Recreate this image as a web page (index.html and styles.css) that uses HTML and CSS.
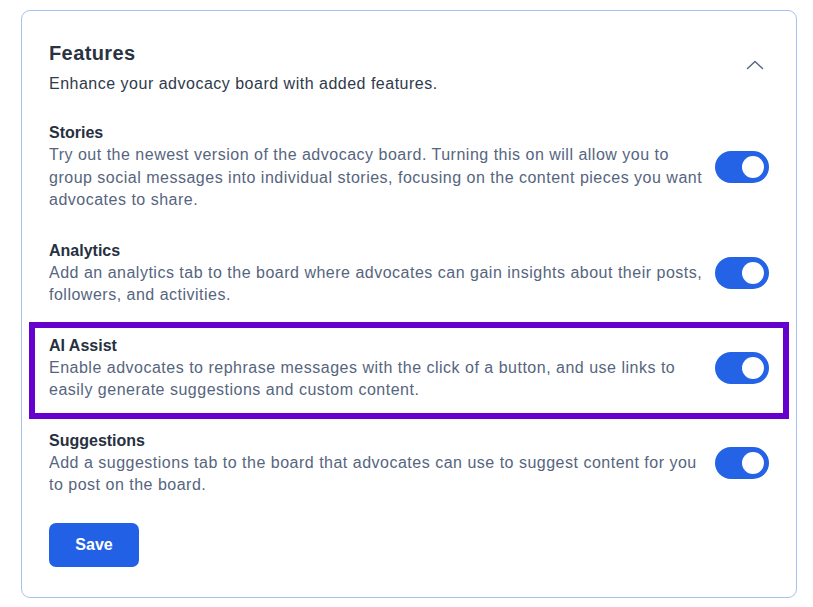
FILE: index.html
```html
<!DOCTYPE html>
<html lang="en">
<head>
<meta charset="utf-8">
<title>Features</title>
<link rel="stylesheet" href="styles.css">
</head>
<body>
<section class="card">
  <header class="card-head">
    <div class="head-text">
      <h2 class="card-title">Features</h2>
      <p class="card-sub">Enhance your advocacy board with added features.</p>
    </div>
    <button class="collapse" aria-label="Collapse">
      <svg width="18" height="10" viewBox="0 0 18 10"><path d="M1.5 8.5 L9 1.5 L16.5 8.5" fill="none" stroke="#5a6880" stroke-width="1.5" stroke-linecap="round" stroke-linejoin="round"/></svg>
    </button>
  </header>

  <div class="row">
    <div class="row-text">
      <h3 class="row-title">Stories</h3>
      <p class="row-desc">Try out the newest version of the advocacy board. Turning this on will allow you to group social messages into individual stories, focusing on the content pieces you want advocates to share.</p>
    </div>
    <span class="toggle"><span class="knob"></span></span>
  </div>

  <div class="row">
    <div class="row-text">
      <h3 class="row-title">Analytics</h3>
      <p class="row-desc">Add an analytics tab to the board where advocates can gain insights about their posts, followers, and activities.</p>
    </div>
    <span class="toggle"><span class="knob"></span></span>
  </div>

  <div class="row highlight">
    <div class="row-text">
      <h3 class="row-title">AI Assist</h3>
      <p class="row-desc">Enable advocates to rephrase messages with the click of a button, and use links to easily generate suggestions and custom content.</p>
    </div>
    <span class="toggle"><span class="knob"></span></span>
  </div>

  <div class="row">
    <div class="row-text">
      <h3 class="row-title">Suggestions</h3>
      <p class="row-desc">Add a suggestions tab to the board that advocates can use to suggest content for you to post on the board.</p>
    </div>
    <span class="toggle"><span class="knob"></span></span>
  </div>

  <div class="actions">
    <button class="save">Save</button>
  </div>
</section>
</body>
</html>
```
FILE: styles.css
```css
* { box-sizing: border-box; }
html, body { margin: 0; padding: 0; background: #ffffff; }
body {
  font-family: "Liberation Sans", Arial, sans-serif;
  padding: 10px 16px 0 21px;
}
.card {
  width: 776px;
  height: 588px;
  border: 1px solid #a9c1ee;
  border-radius: 9px;
  padding: 30px 27px 0 27px;
}
.card-head {
  display: flex;
  align-items: flex-start;
  justify-content: space-between;
  margin-bottom: 13px;
}
.card-title {
  margin: 0;
  font-size: 20px;
  line-height: 24px;
  font-weight: 700;
  letter-spacing: 0.4px;
  color: #2a3342;
}
.card-sub {
  margin: 8px 0 0 0;
  font-size: 16px;
  line-height: 22px;
  letter-spacing: 0.5px;
  color: #2f3a4b;
}
.collapse {
  border: 0;
  background: none;
  padding: 0;
  margin: 19px 5px 0 0;
  width: 18px;
  height: 10px;
  display: flex;
}
.row {
  display: flex;
  align-items: center;
  gap: 10px;
  padding: 14px 0;
  position: relative;
}
.row-text { flex: 1; min-width: 0; }
.row-title {
  margin: 0;
  font-size: 16px;
  line-height: 22px;
  font-weight: 700;
  color: #27303f;
}
.row-desc {
  margin: 0;
  font-size: 16px;
  line-height: 22.5px;
  letter-spacing: 0.5px;
  color: #56657e;
}
.toggle {
  flex: none;
  width: 54px;
  height: 32px;
  border-radius: 16px;
  background: #2563e6;
  display: flex;
  align-items: center;
  justify-content: flex-end;
  padding-right: 5px;
}
.knob {
  width: 22px;
  height: 22px;
  border-radius: 50%;
  background: #ffffff;
}
.highlight::after {
  content: "";
  position: absolute;
  left: -20px;
  right: -20px;
  top: 1.5px;
  bottom: -3.5px;
  border: 6px solid #6600cc;
  pointer-events: none;
}
.actions {
  padding-top: 12px;
}
.save {
  width: 90px;
  height: 44px;
  border: 0;
  border-radius: 7px;
  background: #2261e6;
  color: #ffffff;
  font-family: "Liberation Sans", Arial, sans-serif;
  font-size: 16px;
  font-weight: 700;
}
```
